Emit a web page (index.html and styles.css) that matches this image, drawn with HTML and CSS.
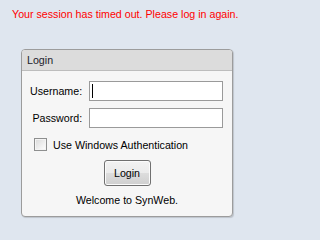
FILE: index.html
```html
<!DOCTYPE html>
<html>
<head>
<meta charset="utf-8">
<link rel="stylesheet" href="styles.css">
</head>
<body>
<div class="error">Your session has timed out. Please log in again.</div>
<div class="panel">
  <div class="panel-head">Login</div>
  <div class="panel-body">
    <div class="fields">
      <label class="lbl" for="u">Username:</label>
      <span class="field caret"><input class="inp" id="u" type="text"></span>
      <label class="lbl" for="p">Password:</label>
      <span class="field"><input class="inp" id="p" type="password"></span>
    </div>
    <div class="check-row">
      <input class="chk" id="w" type="checkbox">
      <label for="w" class="chk-label">Use Windows Authentication</label>
    </div>
    <button class="btn" type="button">Login</button>
    <div class="welcome">Welcome to SynWeb.</div>
  </div>
</div>
</body>
</html>
```
FILE: styles.css
```css
html, body {
  margin: 0;
  padding: 0;
}
body {
  background: #dfe6ef;
  font-family: "Liberation Sans", Arial, sans-serif;
  font-size: 10.667px;
  line-height: 12px;
  color: #000;
  width: 250px;
  height: 226px;
  overflow: hidden;
}
.error {
  color: #ff0000;
  padding: 8px 0 0 12px;
  height: 12px;
}
.panel {
  margin: 29px 0 0 21px;
  width: 212px;
  box-sizing: border-box;
  border: 1px solid #9c9c9c;
  border-radius: 4px;
  background: #f6f6f6;
  box-shadow: 1px 1px 1px rgba(0,0,0,0.15);
  overflow: hidden;
}
.panel-head {
  background: #dcdcdc;
  border-bottom: 1px solid #bdbdbd;
  height: 20px;
  line-height: 20px;
  padding-left: 5px;
  color: #1b1b2b;
}
.panel-body {
  display: flex;
  flex-direction: column;
  align-items: center;
  padding: 10px 0 10px 0;
}
.fields {
  align-self: flex-start;
  margin-left: 8px;
  display: grid;
  grid-template-columns: auto 134px;
  column-gap: 7px;
  row-gap: 7px;
  align-items: center;
}
.lbl {
  text-align: right;
}
.field {
  display: block;
  position: relative;
  height: 20px;
}
.caret::after {
  content: "";
  position: absolute;
  left: 3px;
  top: 3px;
  width: 1px;
  height: 14px;
  background: #000;
}
.inp {
  display: block;
  box-sizing: border-box;
  width: 134px;
  height: 20px;
  margin: 0;
  border: 1px solid #9a9a9a;
  background: #fff;
  padding: 0 2px;
  font: inherit;
  outline: none;
}
.check-row {
  align-self: flex-start;
  margin: 10px 0 0 12px;
  display: flex;
  align-items: center;
  gap: 6px;
  height: 13px;
}
.chk {
  appearance: none;
  -webkit-appearance: none;
  margin: 0;
  width: 13px;
  height: 13px;
  box-sizing: border-box;
  border: 1px solid #8e8f8f;
  background: linear-gradient(135deg, #d9d9d9 0%, #f4f4f4 70%, #ffffff 100%);
  box-shadow: inset 0 0 0 1px #f4f4f4;
}
.chk-label {
  color: #000;
}
.btn {
  margin-top: 9px;
  width: 47px;
  height: 26px;
  box-sizing: border-box;
  border: 1px solid #707070;
  border-radius: 3px;
  background: linear-gradient(to bottom, #f2f2f2 0%, #ebebeb 50%, #dddddd 51%, #cfcfcf 100%);
  box-shadow: inset 0 0 0 1px #fbfbfb;
  font: inherit;
  color: #000;
  padding: 0;
}
.welcome {
  margin-top: 8px;
  text-align: center;
}
```
